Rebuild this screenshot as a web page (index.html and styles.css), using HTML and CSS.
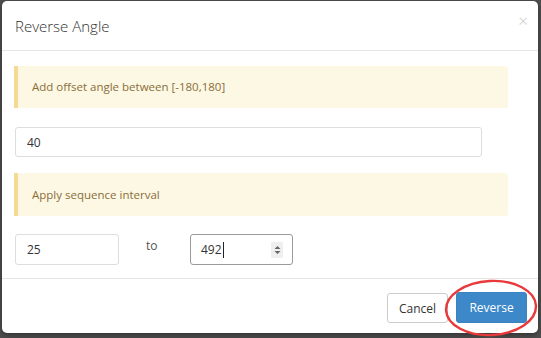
FILE: index.html
```html
<!DOCTYPE html>
<html lang="en">
<head>
  <meta charset="UTF-8" />
  <title>Reverse Angle</title>
  <link rel="stylesheet" href="styles.css">
</head>
<body>
  <div class="modal">
    <div class="modal-header">
      <h4>Reverse Angle</h4>
      <span class="close">&times;</span>
    </div>
    <div class="modal-body">
      <div class="alert">Add offset angle between [-180,180]</div>
      <input class="field wide" type="text" value="40" />
      <div class="alert second">Apply sequence interval</div>
      <div class="interval">
        <input class="field small" type="text" value="25" />
        <span class="to">to</span>
        <div class="field small focus">
          <span>492</span><i class="caret"></i>
          <span class="spin">
            <svg width="7" height="12" viewBox="0 0 7 12"><path d="M0.5 5 L3.5 2 L6.5 5 Z M0.5 7 L3.5 10 L6.5 7 Z" fill="#666"/></svg>
          </span>
        </div>
      </div>
    </div>
    <div class="modal-footer">
      <button class="btn">Cancel</button>
      <button class="btn primary">Reverse</button>
      <svg class="mark" width="96" height="58" viewBox="0 0 96 58">
        <ellipse cx="47" cy="29" rx="45" ry="27" fill="none" stroke="#e8393b" stroke-width="2.4" transform="rotate(-3 47 29)"/>
      </svg>
    </div>
  </div>
</body>
</html>
```

FILE: styles.css
```css
* { box-sizing: border-box; margin: 0; padding: 0; }
body { background: #4f4f4f; font-family: "Open Sans", Arial, sans-serif; font-size: 11.5px; color: #333; height: 338px; overflow: hidden; }
.modal { position: relative; margin: 1px 0 0 2px; width: 536px; height: 332px; background: #fff; border-radius: 5px; box-shadow: 0 2px 6px rgba(0,0,0,0.4); }
.modal-header { position: relative; height: 50px; border-bottom: 1px solid #e5e5e5; padding: 15px 13px 0; }
.modal-header h4 { font-size: 15px; font-weight: 300; color: #333; }
.close { position: absolute; right: 10px; top: 8px; font-size: 17px; color: #c8c8c8; font-weight: 300; }
.modal-body { padding: 15px 30px 13px 12px; display: flex; flex-direction: column; }
.alert { background: #fcf8e3; border-left: 4px solid #f6d994; border-radius: 0 3px 3px 0; color: #8a6d3b; height: 42px; padding: 12px 14px; line-height: 18px; }
.alert.second { height: 43px; margin-top: 16px; padding-top: 13px; }
.field { display: block; height: 30px; border: 1px solid #ddd; border-radius: 3px; padding: 0 11px; font-family: inherit; font-size: 12px; color: #333; background: #fff; }
.wide { width: 467px; margin: 19px 0 0 1px; }
.interval { display: flex; align-items: flex-start; margin: 18px 0 0 1px; height: 31px; }
.small { width: 104px; height: 31px; }
.to { margin: 3px 0 0 27px; width: 44px; flex: none; color: #555; font-size: 12px; }
.focus { display: flex; align-items: center; width: 103px; border-color: #9a9a9a; padding-left: 10px; }
.caret { display: inline-block; width: 1px; height: 16px; background: #222; margin-left: 1px; }
.spin { margin-left: auto; margin-right: -2px; width: 12px; height: 16px; background: #efefef; display: flex; align-items: center; justify-content: center; }
.modal-footer { position: relative; border-top: 1px solid #e5e5e5; padding: 14px 11px 0 0; display: flex; justify-content: flex-end; gap: 8px; }
.btn { height: 30px; width: 61px; border: 1px solid #ccc; border-radius: 3px; background: #fff; font-family: inherit; font-size: 12px; color: #333; }
.btn.primary { background: #3d88c9; border-color: #3a82c0; color: #fff; width: 71px; margin-top: -1px; height: 31px; }
.mark { position: absolute; right: -2px; top: 0; }
```
